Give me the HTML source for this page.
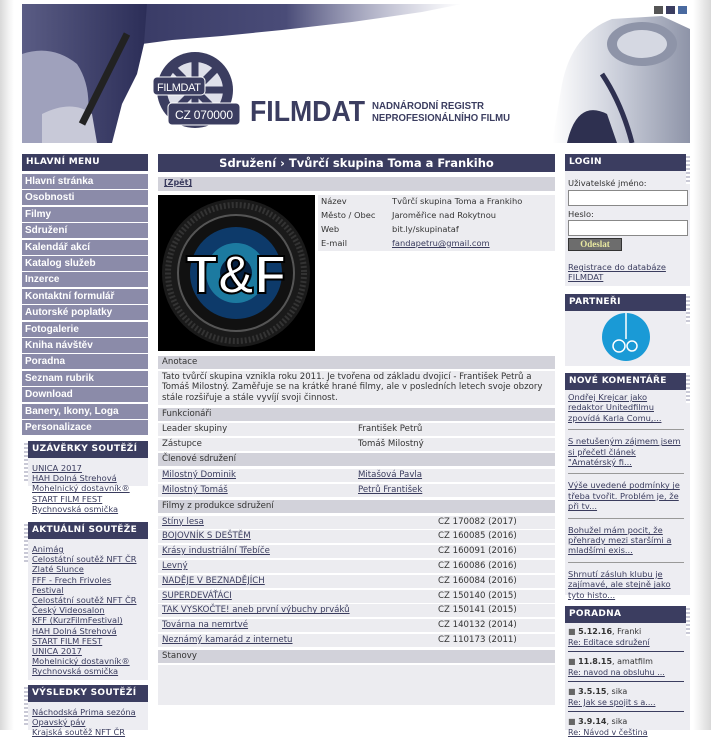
<!DOCTYPE html>
<html><head><meta charset="utf-8">
<style>
*{margin:0;padding:0;box-sizing:border-box}
body{width:711px;height:730px;overflow:hidden;background:#fff;font-family:"DejaVu Sans","Liberation Sans",sans-serif;font-size:8.3px;color:#333;position:relative}
a{color:#3a3c5e;text-decoration:underline}
.edgeL{position:absolute;left:0;top:0;width:14px;height:730px;background:linear-gradient(90deg,#d8d8d8,#f2f2f2 60%,#fff)}
.edgeR{position:absolute;right:0;top:0;width:18px;height:730px;background:linear-gradient(270deg,#d8d8d8,#f0f0f0 60%,#fff)}
.hdr{position:absolute;left:22px;top:4px;width:670px;height:139px;background:#fff;overflow:hidden}
.dark{background:#3b3d60;color:#fff;font-weight:bold}
.lh{position:absolute;height:17px;font-size:9px;padding:3px 0 0 4px;letter-spacing:.3px}
.mi{position:absolute;left:22px;width:126px;height:15px;background:#8b8ba9;color:#fff;font-weight:bold;font-size:10px;font-family:"Liberation Sans",sans-serif;padding:2px 0 0 3px}
.box{position:absolute;background:#ededf2}
.links{font-size:8.3px;line-height:10.2px;padding:2px 0 0 10px}
.links a{display:block;color:#3a3c5e;white-space:nowrap}
.dots{position:absolute;width:4px;background:repeating-linear-gradient(#fff 0 2px,#c9c9d6 2px 4px)}
.row{position:absolute;left:158px;width:397px;height:13px;padding:1px 0 0 4px;font-size:8.6px}
.g{background:#d2d2da}
.l{background:#ececf0}
.c2{position:absolute;left:200px;top:1px}
.c3{position:absolute;left:280px;top:1px}
</style></head><body>
<div class="edgeL"></div><div class="edgeR"></div>

<div class="hdr">
<svg width="670" height="139" viewBox="0 0 670 139">
<defs>
<linearGradient id="sw" x1="0" x2="1"><stop offset="0" stop-color="#2c2e58"/><stop offset=".6" stop-color="#4a4c78"/><stop offset="1" stop-color="#8a8cb0" stop-opacity="0"/></linearGradient>
<linearGradient id="ph" x1="0" x2="1"><stop offset="0" stop-color="#5a5c84"/><stop offset="1" stop-color="#2c2e58"/></linearGradient>
<linearGradient id="rr" x1="0" x2="1"><stop offset="0" stop-color="#fff"/><stop offset=".5" stop-color="#c8ccd8"/><stop offset="1" stop-color="#8e94a8"/></linearGradient>
</defs>
<path d="M0 0 H440 L400 8 L330 18 L260 26 L200 32 L150 36 L120 40 L0 44 Z" fill="url(#sw)"/>
<path d="M0 0 H125 L122 40 L115 70 L100 100 L90 139 H0 Z" fill="url(#ph)"/>
<path d="M0 50 Q30 40 55 60 Q75 90 60 139 H0Z" fill="#9fa1bc"/>
<path d="M20 110 Q50 95 70 110 L75 139 H20Z" fill="#c8c9d8"/>
<path d="M60 120 L105 30" stroke="#222" stroke-width="7"/>
<path d="M530 139 L540 80 Q550 30 590 15 L640 12 L668 25 V139Z" fill="url(#rr)"/>
<ellipse cx="620" cy="40" rx="35" ry="22" fill="#8e94a8"/>
<ellipse cx="620" cy="40" rx="25" ry="14" fill="#d5d8e2"/>
<path d="M580 70 Q600 100 610 139" stroke="#2e3050" stroke-width="5" fill="none"/>
<path d="M545 139 Q555 95 585 110 L595 139Z" fill="#2e3050"/>
<rect x="632" y="2" width="9" height="8" fill="#555"/><rect x="644" y="2" width="9" height="8" fill="#3b3d60"/><rect x="656" y="2" width="9" height="8" fill="#4a6aa0"/>
<circle cx="173" cy="86" r="38" fill="#3b3d60"/>
<circle cx="173" cy="86" r="28" fill="#dfe0ea"/>
<g stroke="#3b3d60" stroke-width="7"><line x1="173" y1="58" x2="173" y2="114"/><line x1="145" y1="86" x2="201" y2="86"/><line x1="153" y1="66" x2="193" y2="106"/><line x1="193" y1="66" x2="153" y2="106"/></g>
<circle cx="173" cy="86" r="6" fill="#3b3d60"/>
<rect x="131" y="73" width="52" height="18" rx="4" fill="#3b3d60" stroke="#fff"/>
<text x="135" y="87" font-size="11" fill="#fff" font-family="Liberation Sans" textLength="44">FILMDAT</text>
<rect x="146" y="99" width="72" height="22" rx="4" fill="#3b3d60" stroke="#fff"/>
<text x="153" y="115" font-size="12" fill="#fff" font-family="Liberation Sans" textLength="58">CZ 070000</text>
<text x="228" y="117" font-size="29" font-weight="bold" fill="#3b3d60" font-family="Liberation Sans" textLength="115" lengthAdjust="spacingAndGlyphs">FILMDAT</text>
<text x="350" y="105" font-size="10" font-weight="bold" fill="#3b3d60" font-family="Liberation Sans" textLength="112" lengthAdjust="spacingAndGlyphs">NADNÁRODNÍ REGISTR</text>
<text x="350" y="117" font-size="10" font-weight="bold" fill="#3b3d60" font-family="Liberation Sans" textLength="138" lengthAdjust="spacingAndGlyphs">NEPROFESIONÁLNÍHO FILMU</text>
</svg>
</div>

<!-- left menu -->
<div class="lh dark" style="left:22px;top:154px;width:126px">HLAVNÍ MENU</div>
<div class="mi" style="top:174px">Hlavní stránka</div>
<div class="mi" style="top:190.4px">Osobnosti</div>
<div class="mi" style="top:206.8px">Filmy</div>
<div class="mi" style="top:223.2px">Sdružení</div>
<div class="mi" style="top:239.6px">Kalendář akcí</div>
<div class="mi" style="top:256px">Katalog služeb</div>
<div class="mi" style="top:272.4px">Inzerce</div>
<div class="mi" style="top:288.8px">Kontaktní formulář</div>
<div class="mi" style="top:305.2px">Autorské poplatky</div>
<div class="mi" style="top:321.6px">Fotogalerie</div>
<div class="mi" style="top:338px">Kniha návštěv</div>
<div class="mi" style="top:354.4px">Poradna</div>
<div class="mi" style="top:370.8px">Seznam rubrik</div>
<div class="mi" style="top:387.2px">Download</div>
<div class="mi" style="top:403.6px">Banery, Ikony, Loga</div>
<div class="mi" style="top:420px">Personalizace</div>

<div class="box" style="left:28px;top:441px;width:120px;height:45px"></div>
<div class="lh dark" style="left:24px;top:441px;width:124px;padding-left:8px">UZÁVĚRKY SOUTĚŽÍ</div>
<div class="dots" style="left:24px;top:441px;height:40px"></div>
<div class="links" style="position:absolute;left:22px;top:461px;width:130px">
<a>UNICA 2017</a><a>HAH Dolná Strehová</a><a>Mohelnický dostavník®</a><a>START FILM FEST</a><a>Rychnovská osmička</a></div>

<div class="box" style="left:28px;top:522px;width:120px;height:158px"></div>
<div class="lh dark" style="left:24px;top:522px;width:124px;padding-left:8px">AKTUÁLNÍ SOUTĚŽE</div>
<div class="dots" style="left:24px;top:522px;height:40px"></div>
<div class="links" style="position:absolute;left:22px;top:542px;width:130px">
<a>Animág</a><a>Celostátní soutěž NFT ČR</a><a>Zlaté Slunce</a><a>FFF - Frech Frivoles</a><a>Festival</a><a>Celostátní soutěž NFT ČR</a><a>Český Videosalon</a><a>KFF (KurzFilmFestival)</a><a>HAH Dolná Strehová</a><a>START FILM FEST</a><a>UNICA 2017</a><a>Mohelnický dostavník®</a><a>Rychnovská osmička</a></div>

<div class="box" style="left:28px;top:685px;width:120px;height:45px"></div>
<div class="lh dark" style="left:24px;top:685px;width:124px;padding-left:8px">VÝSLEDKY SOUTĚŽÍ</div>
<div class="dots" style="left:24px;top:685px;height:40px"></div>
<div class="links" style="position:absolute;left:22px;top:705px;width:130px">
<a>Náchodská Prima sezóna</a><a>Opavský páv</a><a>Krajská soutěž NFT ČR</a></div>

<!-- middle -->
<div class="dark" style="position:absolute;left:158px;top:154px;width:397px;height:18px;text-align:center;font-size:11.5px;padding-top:2px">Sdružení › Tvůrčí skupina Toma a Frankiho</div>
<div class="row g" style="top:177px;height:14px;padding-left:6px"><a style="font-size:8px;font-weight:bold">[Zpět]</a></div>
<svg style="position:absolute;left:158px;top:195px" width="157" height="156" viewBox="0 0 157 156">
<rect width="157" height="156" fill="#000"/>
<circle cx="78" cy="78" r="74" fill="#1a1a1a"/>
<circle cx="78" cy="78" r="68" fill="none" stroke="#333" stroke-width="6" stroke-dasharray="2 2"/>
<circle cx="78" cy="78" r="58" fill="#111" stroke="#555" stroke-width="2"/>
<circle cx="78" cy="78" r="46" fill="#0d3a6a"/>
<circle cx="78" cy="78" r="30" fill="#1c7aa0"/>
<circle cx="78" cy="78" r="16" fill="#052040"/>
<text x="78" y="98" text-anchor="middle" font-size="54" font-weight="bold" fill="#fff" stroke="#000" stroke-width="2" font-family="Liberation Sans" textLength="100" lengthAdjust="spacingAndGlyphs">T&amp;F</text>
</svg>
<div style="position:absolute;left:318px;top:195px;width:237px;font-size:8.3px">
<div style="height:14px;background:#ececf0;position:relative;padding:1px 3px">Název<span style="position:absolute;left:74px">Tvůrčí skupina Toma a Frankiho</span></div>
<div style="height:14px;background:#ececf0;position:relative;padding:1px 3px">Město / Obec<span style="position:absolute;left:74px">Jaroměřice nad Rokytnou</span></div>
<div style="height:14px;background:#ececf0;position:relative;padding:1px 3px">Web<span style="position:absolute;left:74px">bit.ly/skupinataf</span></div>
<div style="height:14px;background:#ececf0;position:relative;padding:1px 3px">E-mail<span style="position:absolute;left:74px"><a>fandapetru@gmail.com</a></span></div>
</div>

<div class="row g" style="top:356px">Anotace</div>
<div class="row l" style="top:371px;height:34px;line-height:10.4px;padding-right:2px">Tato tvůrčí skupina vznikla roku 2011. Je tvořena od základu dvojicí - František Petrů a Tomáš Milostný. Zaměřuje se na krátké hrané filmy, ale v posledních letech svoje obzory stále rozšiřuje a stále vyvíjí svoji činnost.</div>
<div class="row g" style="top:408px">Funkcionáři</div>
<div class="row l" style="top:423px">Leader skupiny<span class="c2">František Petrů</span></div>
<div class="row l" style="top:438px">Zástupce<span class="c2">Tomáš Milostný</span></div>
<div class="row g" style="top:453px">Členové sdružení</div>
<div class="row l" style="top:469px"><a>Milostný Dominik</a><span class="c2"><a>Mitašová Pavla</a></span></div>
<div class="row l" style="top:484px"><a>Milostný Tomáš</a><span class="c2"><a>Petrů František</a></span></div>
<div class="row g" style="top:500px">Filmy z produkce sdružení</div>
<div class="row l" style="top:515.5px"><a>Stíny lesa</a><span class="c3">CZ 170082 (2017)</span></div>
<div class="row l" style="top:530.3px"><a>BOJOVNÍK S DEŠTĚM</a><span class="c3">CZ 160085 (2016)</span></div>
<div class="row l" style="top:545.1px"><a>Krásy industriální Třebíče</a><span class="c3">CZ 160091 (2016)</span></div>
<div class="row l" style="top:559.9px"><a>Levný</a><span class="c3">CZ 160086 (2016)</span></div>
<div class="row l" style="top:574.7px"><a>NADĚJE V BEZNADĚJÍCH</a><span class="c3">CZ 160084 (2016)</span></div>
<div class="row l" style="top:589.5px"><a>SUPERDEVÁŤÁCI</a><span class="c3">CZ 150140 (2015)</span></div>
<div class="row l" style="top:604.3px"><a>TAK VYSKOČTE! aneb první výbuchy prváků</a><span class="c3">CZ 150141 (2015)</span></div>
<div class="row l" style="top:619.1px"><a>Továrna na nemrtvé</a><span class="c3">CZ 140132 (2014)</span></div>
<div class="row l" style="top:633.9px"><a>Neznámý kamarád z internetu</a><span class="c3">CZ 110173 (2011)</span></div>
<div class="row g" style="top:650px">Stanovy</div>
<div class="row l" style="top:665px;height:40px"></div>

<!-- right -->
<div class="box" style="left:565px;top:154px;width:125px;height:132px"></div>
<div class="lh dark" style="left:565px;top:154px;width:121px">LOGIN</div>
<div class="dots" style="left:686px;top:154px;height:30px"></div>
<div style="position:absolute;left:568px;top:178px">Uživatelské jméno:</div>
<div style="position:absolute;left:568px;top:190px;width:120px;height:16px;background:#fff;border:1px solid #888"></div>
<div style="position:absolute;left:568px;top:209px">Heslo:</div>
<div style="position:absolute;left:568px;top:220px;width:120px;height:16px;background:#fff;border:1px solid #888"></div>
<div style="position:absolute;left:568px;top:238px;width:54px;height:13px;background:#6d6d6d;border:1px solid #333;color:#e8e8a0;font-weight:bold;font-size:9px;text-align:center;font-family:'Liberation Serif',serif">Odeslat</div>
<div style="position:absolute;left:568px;top:262px;line-height:10px"><a>Registrace do databáze<br>FILMDAT</a></div>

<div class="box" style="left:565px;top:294px;width:125px;height:72px"></div>
<div class="lh dark" style="left:565px;top:294px;width:121px">PARTNEŘI</div>
<div class="dots" style="left:686px;top:294px;height:30px"></div>
<svg style="position:absolute;left:602px;top:313px" width="48" height="48"><circle cx="24" cy="24" r="24" fill="#1a9ad6"/><line x1="24" y1="0" x2="24" y2="26" stroke="#fff" stroke-width="1.5"/><circle cx="17" cy="33" r="6" fill="none" stroke="#fff" stroke-width="1.5"/><circle cx="30" cy="33" r="5" fill="none" stroke="#fff" stroke-width="1.5"/></svg>

<div class="box" style="left:565px;top:373px;width:125px;height:222px"></div>
<div class="lh dark" style="left:565px;top:373px;width:121px">NOVÉ KOMENTÁŘE</div>
<div class="dots" style="left:686px;top:373px;height:30px"></div>
<div style="position:absolute;left:568px;top:392px;width:116px;line-height:10.4px">
<div style="border-bottom:1px solid #999;padding-bottom:6px;margin-bottom:6px"><a>Ondřej Krejcar jako redaktor Unitedfilmu zpovídá Karla Comu,...</a></div>
<div style="border-bottom:1px solid #999;padding-bottom:6px;margin-bottom:6px"><a>S netušeným zájmem jsem si přečetl článek "Amatérský fi...</a></div>
<div style="border-bottom:1px solid #999;padding-bottom:6px;margin-bottom:6px"><a>Výše uvedené podmínky je třeba tvořit. Problém je, že při tv...</a></div>
<div style="border-bottom:1px solid #999;padding-bottom:6px;margin-bottom:6px"><a>Bohužel mám pocit, že přehrady mezi staršími a mladšími exis...</a></div>
<div style="border-bottom:1px solid #999;padding-bottom:6px"><a>Shrnutí zásluh klubu je zajímavé, ale stejně jako tyto histo...</a></div>
</div>

<div class="box" style="left:565px;top:606px;width:125px;height:124px"></div>
<div class="lh dark" style="left:565px;top:606px;width:121px">PORADNA</div>
<div class="dots" style="left:686px;top:606px;height:30px"></div>
<div style="position:absolute;left:568px;top:627px;width:116px;font-size:8px;line-height:10.5px">
<div style="border-bottom:1px solid #3b3d60;padding-bottom:3px;margin-bottom:5px"><span style="color:#666">■</span> <b>5.12.16</b>, Franki<br><a>Re: Editace sdružení</a></div>
<div style="border-bottom:1px solid #3b3d60;padding-bottom:3px;margin-bottom:5px"><span style="color:#666">■</span> <b>11.8.15</b>, amatfilm<br><a>Re: navod na obsluhu ...</a></div>
<div style="border-bottom:1px solid #3b3d60;padding-bottom:3px;margin-bottom:5px"><span style="color:#666">■</span> <b>3.5.15</b>, sika<br><a>Re: Jak se spojit s a....</a></div>
<div><span style="color:#666">■</span> <b>3.9.14</b>, sika<br><a>Re: Návod v čeština</a></div>
</div>
</body></html>
